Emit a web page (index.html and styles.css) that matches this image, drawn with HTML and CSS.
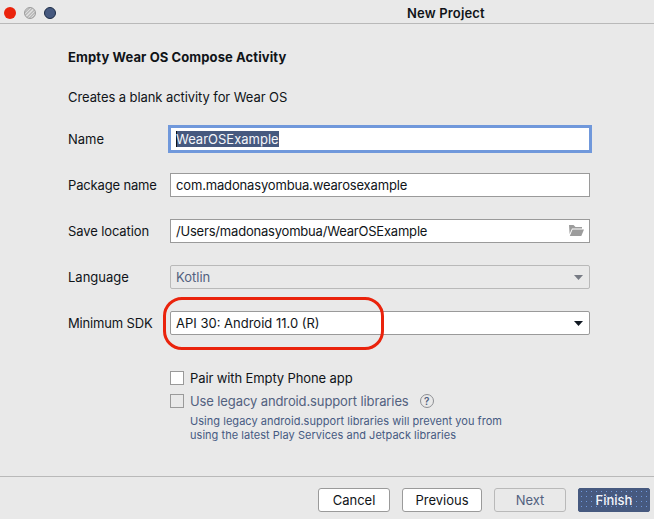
FILE: index.html
```html
<!DOCTYPE html>
<html lang="en">
<head>
<meta charset="utf-8">
<title>New Project</title>
<link rel="stylesheet" href="styles.css">
</head>
<body>
<div class="window">
  <header class="titlebar">
    <div class="lights">
      <span class="light close"></span>
      <span class="light minimize"></span>
      <span class="light zoom"></span>
    </div>
    <span class="title">New Project</span>
  </header>
  <main class="content">
    <h1 class="heading">Empty Wear OS Compose Activity</h1>
    <p class="description">Creates a blank activity for Wear OS</p>
    <form class="form">
      <div class="row">
        <span class="label">Name</span>
        <div class="field focused"><span class="selection">WearOSExample</span></div>
      </div>
      <div class="row">
        <span class="label tight">Package name</span>
        <div class="field"><span class="tight">com.madonasyombua.wearosexample</span></div>
      </div>
      <div class="row">
        <span class="label snug">Save location</span>
        <div class="field">
          <span class="tighter">/Users/madonasyombua/WearOSExample</span>
          <svg class="folder" width="15" height="12" viewBox="0 0 15 12"><path d="M0 0h4.5l2 2H13v1.6H3L0.6 9z M3.5 4.6H15L12.3 11H0.8z" fill="#9c9c9c"/></svg>
        </div>
      </div>
      <div class="row">
        <span class="label">Language</span>
        <div class="field select disabled"><span>Kotlin</span><svg class="arrow" width="9" height="5" viewBox="0 0 9 5"><path d="M0 0h9L4.5 5z" fill="#777b84"/></svg></div>
      </div>
      <div class="row">
        <span class="label tight">Minimum SDK</span>
        <div class="field select"><span>API 30: Android 11.0 (R)</span><svg class="arrow" width="9" height="5" viewBox="0 0 9 5"><path d="M0 0h9L4.5 5z" fill="#101822"/></svg>
          <span class="highlight"></span>
        </div>
      </div>
    </form>
    <div class="options">
      <div class="option"><span class="checkbox"></span><span class="snug">Pair with Empty Phone app</span></div>
      <div class="option muted"><span class="checkbox off"></span><span class="snug">Use legacy android.support libraries</span><span class="help">?</span></div>
      <p class="note">Using legacy android.support libraries will prevent you from<br>using the latest Play Services and Jetpack libraries</p>
    </div>
  </main>
  <footer class="footer">
    <span class="button">Cancel</span>
    <span class="button wide">Previous</span>
    <span class="button inactive">Next</span>
    <span class="button primary">Finish</span>
  </footer>
</div>
</body>
</html>
```
FILE: styles.css
```css
* { box-sizing: border-box; }
body {
  margin: 0;
  background: #e9e9e9;
  color: #101418;
  font: 13px/16px Inter, "Liberation Sans", sans-serif;
  white-space: nowrap;
}
.window { width: 654px; height: 519px; display: flex; flex-direction: column; overflow: hidden; }
.titlebar {
  height: 24px;
  flex: none;
  border-bottom: 1px solid #b9b9b9;
  display: flex;
  align-items: center;
  padding: 2px 0 0 4px;
}
.lights { display: flex; gap: 8px; width: 403px; }
.light { width: 12px; height: 12px; border-radius: 50%; }
.close { background: #ea230c; }
.minimize { border: 1px solid #9c9c9c; background: repeating-linear-gradient(135deg, #bdbdbd 0 1.4px, #dcdcdc 1.4px 2.4px); }
.zoom { background: #46597f; border: 1px solid #1b2b45; }
.title { font-weight: 600; letter-spacing: 0.17px; }
.content { flex: 1; padding: 25px 62px 0 68px; }
.heading { margin: 0; font-size: 13px; font-weight: 700; line-height: 16px; letter-spacing: 0.1px; }
.description { margin: 24px 0 22px; letter-spacing: -0.08px; }
.form { display: grid; gap: 22px; }
.row { display: flex; align-items: center; height: 24px; }
.label { width: 102px; flex: none; }
.snug { letter-spacing: -0.11px; }
.tight { letter-spacing: -0.16px; }
.tighter { letter-spacing: -0.2px; }
.field {
  position: relative;
  flex: 0 0 420px;
  height: 24px;
  border: 1px solid #9a9a9a;
  background: #fff;
  padding: 0 5px;
  display: flex;
  align-items: center;
  justify-content: space-between;
}
.focused { border-color: #fff; outline: 3px solid #7098db; outline-offset: -1px; }
.selection { background: #46597f; color: #f4f6fa; box-shadow: inset 1px 0 #101418; width: 103px; }
.select { border-radius: 2px; padding-right: 6px; }
.disabled { background: #e9e9e9; border-color: #b9b9b9; color: #52617f; }
.highlight {
  position: absolute;
  left: -8px;
  top: -15px;
  width: 221px;
  height: 53px;
  border: 3px solid #ea230c;
  border-radius: 19px;
}
.options { padding: 35px 0 0 102px; }
.option { display: flex; align-items: center; height: 16px; gap: 6px; margin-bottom: 7px; }
.checkbox { width: 14px; height: 14px; border: 1px solid #9a9a9a; background: #fff; }
.off { background: #e9e9e9; }
.muted { color: #52617f; }
.help {
  width: 14px;
  height: 14px;
  margin-left: 5px;
  border: 1px solid #8d8f93;
  border-radius: 50%;
  font-size: 10px;
  font-weight: 600;
  line-height: 12px;
  text-align: center;
}
.note { margin: -2px 0 0 20px; font-size: 11px; line-height: 14px; letter-spacing: 0.035px; color: #465a82; }
.footer {
  height: 43px;
  flex: none;
  border-top: 1px solid #b9b9b9;
  display: flex;
  justify-content: flex-end;
  gap: 12px;
  padding: 11px 4px 0 0;
}
.button {
  width: 72px;
  height: 24px;
  border: 1px solid #9a9a9a;
  border-radius: 3px;
  background: #fff;
  text-align: center;
  line-height: 23px;
}
.wide { width: 80px; }
.inactive { background: #e9e9e9; border-color: #b9b9b9; color: #52617f; }
.primary { background: #46597f radial-gradient(circle, #6f97dc 0.5px, transparent 0.8px) 0 0 / 5px 5px; border-color: #46597f; border-radius: 2px; color: #f4f6fa; font-weight: 500; }
```
